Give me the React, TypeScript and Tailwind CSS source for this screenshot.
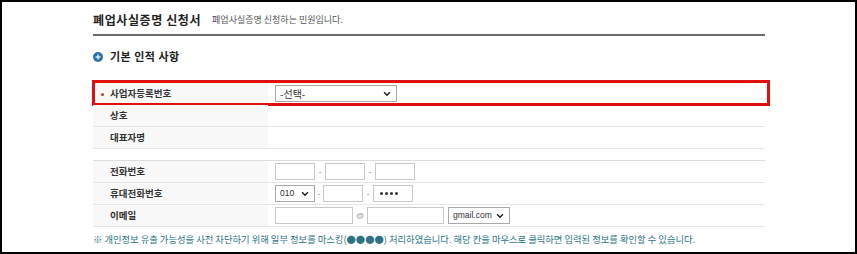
import React from "react";

const Chevron = () => (
  <svg width="8" height="5" viewBox="0 0 9 6" className="absolute right-[5px] top-1/2 -translate-y-1/2">
    <path d="M1 1 L4.5 4.5 L8 1" fill="none" stroke="#222" strokeWidth="1.8" />
  </svg>
);

const SelectBox = ({ w, text, mono }: { w: string; text: string; mono?: boolean }) => (
  <div className={`relative h-[17px] ${w} border border-[#a9a9a9] bg-white flex items-center pl-[4px] text-[#333] ${mono ? "text-[8.5px]" : "text-[10px]"}`}>
    <span style={mono ? { fontFamily: '"Liberation Sans", Arial, sans-serif' } : undefined}>{text}</span>
    <Chevron />
  </div>
);

const Input = ({ w, masked }: { w: string; masked?: boolean }) => (
  <div className={`h-[17px] ${w} border border-[#c9c9c9] bg-white flex items-center pl-[6px] gap-[2px]`}>
    {masked && (
      <>
        <span className="w-[3px] h-[3px] rounded-full bg-[#333]" />
        <span className="w-[3px] h-[3px] rounded-full bg-[#333]" />
        <span className="w-[3px] h-[3px] rounded-full bg-[#333]" />
        <span className="w-[3px] h-[3px] rounded-full bg-[#333]" />
      </>
    )}
  </div>
);

const Dash = ({ w }: { w: string }) => (
  <div className={`${w} text-center text-[9px] text-[#999]`}>-</div>
);

const Row = ({ label, children, bullet }: { label: string; children?: React.ReactNode; bullet?: boolean }) => (
  <div className="flex h-[22px] border-b border-[#e6e6e6]">
    <div className="w-[175px] bg-[#f8f8f8] flex items-center relative pl-[17px] text-[9.5px] font-bold text-[#333]">
      {bullet && <span className="absolute left-[8px] top-[10px] w-[3px] h-[3px] rounded-full bg-[#c0392b]" />}
      {label}
    </div>
    <div className="flex-1 flex items-center pl-[7px]">{children}</div>
  </div>
);

export default function App() {
  return (
    <div
      className="w-[857px] h-[254px] border-2 border-black bg-white overflow-hidden"
      style={{ fontFamily: '"Noto Sans CJK KR", "Noto Sans", sans-serif' }}
    >
      <div className="ml-[91px] w-[672px]">
        <div className="pt-[4px] h-[32px] flex items-center gap-[11px]">
          <span className="text-[12px] font-bold text-[#222] tracking-[0.6px]">폐업사실증명 신청서</span>
          <span className="text-[9px] text-[#555]">폐업사실증명 신청하는 민원입니다.</span>
        </div>
        <div className="h-[2px] bg-[#6b6b6b]" />
        <div className="h-[41px] flex items-center gap-[7px]">
          <span className="w-[10px] h-[10px] rounded-full bg-[#2b73a6] flex items-center justify-center">
            <svg width="6" height="6" viewBox="0 0 6 6">
              <path d="M3 0.5 V5.5 M0.5 3 H5.5" stroke="#dbeaf5" strokeWidth="1.4" />
            </svg>
          </span>
          <span className="text-[11px] font-bold text-[#222] tracking-[0.5px]">기본 인적 사항</span>
        </div>
        <div className="mt-[6px]">
          <div className="relative">
            <Row label="사업자등록번호" bullet>
              <SelectBox w="w-[122px]" text="-선택-" />
            </Row>
            <div className="absolute left-[-1px] top-[-3px] w-[678px] h-[26px] border-[3px] border-[#e01010] pointer-events-none" />
          </div>
          <Row label="상호" />
          <Row label="대표자명" />
        </div>
        <div className="mt-[11px] border-t border-[#dddddd]">
          <Row label="전화번호">
            <Input w="w-[40px]" />
            <Dash w="w-[10px]" />
            <Input w="w-[40px]" />
            <Dash w="w-[10px]" />
            <Input w="w-[40px]" />
          </Row>
          <Row label="휴대전화번호">
            <SelectBox w="w-[40px]" text="010" mono />
            <Dash w="w-[8px]" />
            <Input w="w-[40px]" />
            <Dash w="w-[10px]" />
            <Input w="w-[40px]" masked />
          </Row>
          <Row label="이메일">
            <Input w="w-[78px]" />
            <div className="w-[14px] text-center text-[8px] text-[#999]" style={{ fontFamily: '"Liberation Sans", Arial, sans-serif' }}>@</div>
            <Input w="w-[77px]" />
            <div className="w-[4px]" />
            <SelectBox w="w-[62px]" text="gmail.com" mono />
          </Row>
        </div>
        <div className="h-[26px] flex items-center text-[9.3px] text-[#2d7384] whitespace-nowrap">
          ※ 개인정보 유출 가능성을 사전 차단하기 위해 일부 정보를 마스킹(●●●●) 처리하였습니다. 해당 칸을 마우스로 클릭하면 입력된 정보를 확인할 수 있습니다.
        </div>
      </div>
    </div>
  );
}
